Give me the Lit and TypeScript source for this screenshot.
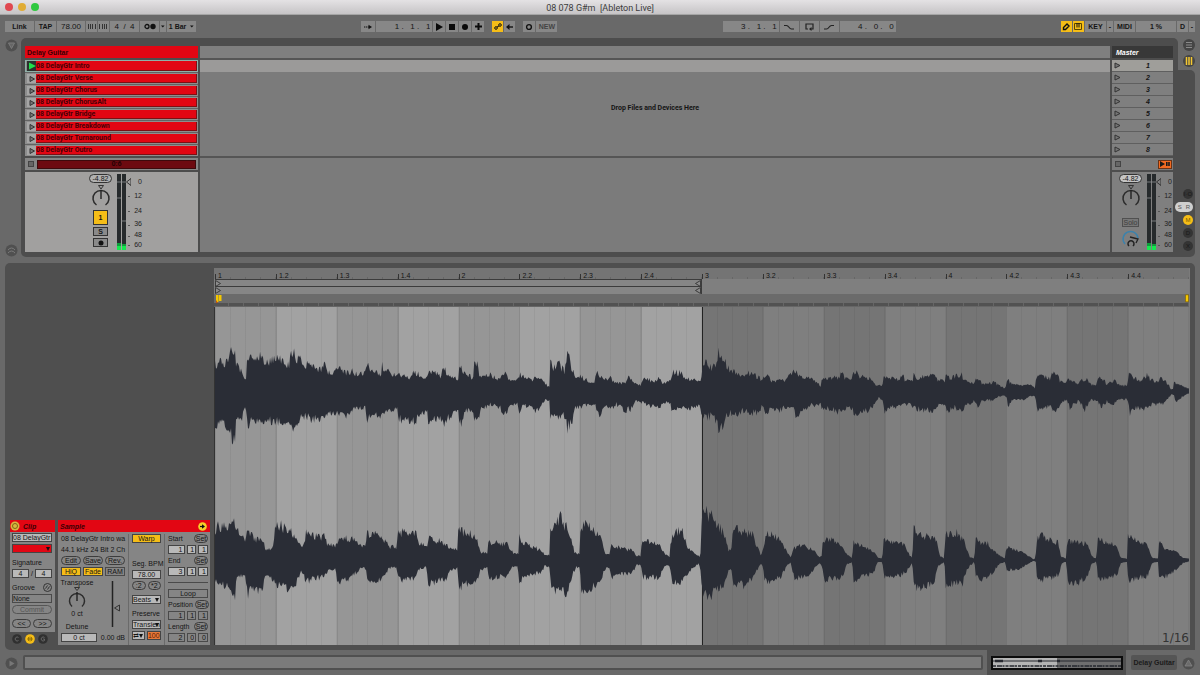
import { LitElement, html, svg, css } from "lit";
import { customElement } from "lit/decorators.js";
import { classMap } from "lit/directives/class-map.js";

const CLIPS = ["Intro", "Verse", "Chorus", "ChorusAlt", "Bridge", "Breakdown", "Turnaround", "Outro"];

/* Envelope outlines: pairs of x and row, one string per stretch of audio. */
type Stretch = { from: number; up: string; down: string };
type Channel = { mid: number; axis: number; stretches: Stretch[] };

const LEFT: Channel = {
  mid: 390, axis: 255, stretches: [
    { from: -48,
      up: "48 305 60 297 90 292 93 255 108 275 115 310 130 325 138 352 142 345 145 272 160 292 180 288 187 265 195 295 230 290 240 280 250 298 265 305 272 305 273 260 288 258 292 285 320 300 350 315 370 315 376 303 382 325 408 328 413 312 440 330 455 330 458 318 465 330 500 332 503 295 510 315 545 332 548 305 560 325 595 336 635 345 645 325 655 330 665 347 684 347 687 320 705 330 725 340 735 308 745 340 775 350",
      down: "48 490 90 505 98 535 108 535 112 480 130 470 138 440 143 450 146 515 155 480 190 490 230 485 265 480 273 500 276 515 288 512 295 480 320 470 345 480 378 475 385 455 440 465 458 460 465 445 500 440 503 490 515 465 548 475 560 452 595 445 600 480 640 480 645 490 660 465 684 460 688 492 705 480 725 470 735 505 745 475 775 455" },
    { from: 702,
      up: "27 345 28 300 45 325 60 340 74 345 75 302 85 302 90 345 125 335 145 350 165 325 175 345 205 350 213 335 225 347 250 352 258 338 275 345 293 370 300 370 303 297 310 310 330 300 338 315 345 325 350 275 358 272 365 310 375 335 400 345 435 362 440 330 455 340 470 352 485 340 490 357 530 365 535 340 550 352 560 368 575 368 580 350 620 355 632 340 640 365 663 357 670 325 695 330 710 350 740 350 755 362 758 315 767 290 775 310 800 310 808 260 815 275 825 290 835 310 850 325 865 335 900 328 935 350 950 330 965 355 1005 355 1035 325 1050 340 1075 345 1100 357 1113 372",
      down: "27 460 28 508 40 485 50 450 73 450 75 487 85 475 95 450 120 430 150 440 168 465 180 440 205 430 210 450 225 435 250 435 258 455 275 435 290 415 300 418 303 465 325 475 340 460 350 485 353 508 370 485 378 440 400 440 420 430 437 430 445 455 455 465 463 435 490 442 500 430 530 450 545 445 560 420 580 425 600 435 630 445 640 425 663 430 665 455 680 445 735 440 750 430 757 460 765 475 795 465 805 508 825 492 835 460 865 460 885 450 900 460 930 455 938 430 950 465 965 440 990 450 1005 440 1030 440 1037 465 1060 455 1075 435 1113 430" },
    { from: 1812,
      up: "3 352 15 345 60 345 65 325 75 345 95 350 107 320 115 340 150 345 170 371 188 371 193 340 240 350 247 330 255 350 280 350 283 325 290 345 330 340 340 325 350 350 375 357 380 320 390 345 425 332 430 347 445 360 465 362 470 347 490 365 525 360 545 375 557 378 563 350 575 365 600 370 625 363 645 378 650 340 690 345 700 330 715 335 720 355 740 362 747 345 770 367 790 350 800 350 812 367 830 367 835 343 850 350 860 365 885 355 900 370 922 370 928 328 940 345 965 355 985 332 990 350 1016 360 1020 347 1045 365 1052 382 1059 382 1062 362 1080 367 1107 382",
      down: "3 440 40 450 65 458 80 440 95 440 107 467 120 450 150 452 175 410 190 415 195 458 215 442 240 435 270 430 285 445 340 452 355 435 375 430 382 452 400 440 428 447 440 430 465 420 472 442 485 420 520 415 545 402 560 405 565 437 580 415 610 415 630 405 645 405 652 445 690 435 698 457 715 440 730 420 742 420 750 440 775 420 795 447 812 415 835 420 845 442 860 420 880 430 895 412 922 415 930 457 950 440 980 447 1000 430 1025 432 1045 410 1055 397 1062 402 1067 427 1085 407 1107 395" },
  ],
};

const RIGHT: Channel = {
  mid: 240, axis: 762, stretches: [
    { from: -48,
      up: "48 170 55 130 90 130 97 112 110 115 115 150 130 150 137 190 143 145 155 160 175 175 195 185 200 206 220 206 225 180 228 115 240 125 265 145 272 135 290 165 305 198 315 190 322 140 335 160 375 165 385 190 410 192 415 175 430 170 460 172 485 190 498 196 502 155 545 155 555 175 570 197 592 198 597 150 650 155 660 188 683 196 687 165 705 175 740 185 755 200 776 206 778 105 783 145 800 150 815 155 835 175 843 215 865 215 868 180 925 188 930 207 950 220 957 218 960 165 970 185 1020 205 1035 220 1050 222 1053 118 1060 150 1070 120 1085 102 1090 130 1100 130 1115 160 1125 215 1140 220 1143 140 1160 125 1170 135 1190 155 1205 170 1213 205 1220 220 1230 222 1235 190 1260 200 1300 210 1310 226 1323 226 1328 178 1380 182 1395 220 1410 230 1413 180 1430 145 1450 145 1460 190 1480 210 1500 227",
      down: "48 300 60 320 90 325 108 350 113 300 130 290 137 280 143 325 148 352 160 325 190 340 200 290 220 300 230 320 285 335 295 300 305 280 315 285 318 320 330 305 380 290 390 270 410 270 415 312 450 300 470 280 485 265 500 265 503 307 545 305 560 280 575 262 592 265 597 302 640 300 660 270 680 260 688 318 740 300 755 270 776 265 779 355 787 320 820 312 835 300 843 270 865 265 868 302 920 290 935 265 955 260 960 315 970 300 1030 275 1035 255 1050 265 1055 325 1080 345 1105 342 1120 285 1130 260 1142 265 1145 330 1160 340 1205 305 1215 270 1230 265 1238 302 1245 290 1300 280 1310 255 1325 255 1330 297 1380 295 1395 258 1412 258 1415 300 1435 322 1455 300 1475 270 1498 250" },
    { from: 1452,
      up: "3 215 8 75 15 90 38 90 45 110 60 130 75 160 80 185 88 212 95 205 98 165 108 135 130 145 160 160 170 190 185 227 195 180 200 155 225 160 245 180 265 220 273 231 285 200 300 190 340 205 360 231 366 225 370 170 400 178 430 190 440 220 458 232 461 175 480 190 520 210 535 233 548 233 552 165 570 180 615 190 625 215 638 235 641 137 655 155 710 175 720 225 734 235 737 138 745 165 755 148 770 150 780 165 792 165 800 205 810 230 824 235 828 168 845 190 862 182 875 200 900 225 915 234 920 198 960 210 985 225 1000 237 1007 235 1010 175 1025 158 1045 170 1075 185 1083 227 1099 235 1102 182 1130 180 1165 190 1175 227 1190 235 1193 165 1210 182 1250 192 1262 231 1281 235 1284 163 1310 180 1345 195 1355 231 1374 235 1377 178 1390 200 1430 215 1450 233 1469 235",
      down: "3 280 8 335 20 358 45 345 75 318 88 268 96 275 100 320 140 320 165 290 175 265 187 250 195 300 210 312 245 292 265 255 273 248 285 302 330 285 360 248 368 260 375 315 390 302 430 292 440 255 458 245 462 310 480 292 520 285 535 245 548 245 553 297 600 290 620 277 638 245 642 315 655 330 700 322 715 260 734 245 738 318 770 315 790 315 800 270 824 245 828 285 845 302 875 287 900 250 915 245 920 272 960 267 1000 242 1008 245 1012 308 1060 297 1080 282 1085 250 1099 245 1103 308 1140 312 1165 290 1175 250 1190 245 1194 302 1250 290 1262 250 1281 245 1285 305 1345 290 1355 250 1374 245 1378 305 1420 277 1450 248 1469 244" },
  ],
};

function outline(ch: Channel, side: "up" | "down"): Array<[number, number]> {
  const pts: Array<[number, number]> = [];
  for (const s of ch.stretches) {
    const n = s[side].split(" ").map(Number);
    for (let i = 0; i < n.length; i += 2) pts.push([n[i] + s.from, Math.abs(n[i + 1] - ch.mid)]);
  }
  return pts;
}

function sample(pts: Array<[number, number]>, seed: number): Array<[number, number]> {
  const out: Array<[number, number]> = [];
  let r = seed;
  let k = 0;
  for (let x = 0; x <= 2919; x += 3) {
    while (k < pts.length - 2 && pts[k + 1][0] < x) k++;
    const [x0, a0] = pts[k];
    const [x1, a1] = pts[k + 1];
    const t = Math.min(1, Math.max(0, (x - x0) / (x1 - x0 || 1)));
    r = (r * 16807) % 2147483647;
    const noise = r / 2147483647;
    out.push([x, (a0 + (a1 - a0) * t) * (1.1 - 0.34 * noise)]);
  }
  return out;
}

function wavePath(ch: Channel, seed: number): string {
  const top = sample(outline(ch, "up"), seed).map(([x, a]) => `${x} ${(ch.axis - a).toFixed(0)}`);
  const bottom = sample(outline(ch, "down"), seed + 77).reverse().map(([x, a]) => `${x} ${(ch.axis + a).toFixed(0)}`);
  return `M${top.join("L")}L${bottom.join("L")}Z`;
}

const WAVES = [wavePath(LEFT, 4211), wavePath(RIGHT, 977)];

const base = css`
  * { box-sizing: border-box; }
  button, input, select {
    font: inherit; color: inherit; margin: 0; padding: 0; border: 0; border-radius: 0;
    background: none; min-width: 0; appearance: none; outline: none;
  }
  button { display: flex; align-items: center; justify-content: center; white-space: nowrap; }
  svg { display: block; flex: none; }
`;

@customElement("transport-bar")
class TransportBar extends LitElement {
  static styles = [base, css`
    :host { display: flex; justify-content: space-between; padding: 6px 5px; height: 23px;
      font: bold 7px "Liberation Sans", sans-serif; color: #151515; }
    .group, .set { display: flex; gap: 1px; }
    .group { gap: 8px; }
    .set > * { height: 11px; background: #878787; }
    .w5 { width: 6px; } .w11 { width: 11px; } .w12 { width: 12px; } .w14 { width: 14px; } .w19 { width: 19px; }
    .w21 { width: 21px; } .w28 { width: 28px; } .w29 { width: 29px; } .w40 { width: 40px; } .w57 { width: 56px; }
    .on { background: #f5bd17; }
    .num { font-size: 8px; font-weight: normal; text-align: center; }
    .pos { font-size: 8px; font-weight: normal; text-align: right; padding-right: 2px; white-space: pre; }
    .dim { color: #444; }
  `];
  render() {
    return html`
      <div class="set">
        <button class="w29">Link</button><button class="w21">TAP</button>
        <input class="w28 num" aria-label="Tempo" value="78.00">
        <button class="w11" aria-label="Nudge down"><svg width="9" height="7"><path d="M1.500 1v5M3.500 1v5M5.500 1v5M8.500 1v5" stroke="#333"/></svg></button>
        <button class="w11" aria-label="Nudge up"><svg width="9" height="7"><path d="M.5 1v5M3.500 1v5M5.500 1v5M7.500 1v5" stroke="#333"/></svg></button>
        <input class="w29 num" aria-label="Time signature" value="4  /  4">
        <button class="w19" aria-label="Metronome"><svg width="12" height="7"><circle cx="3" cy="3.500" r="2" fill="none" stroke="#111" stroke-width="1.300"/><circle cx="9" cy="3.500" r="2.700" fill="#111"/></svg></button>
        <button class="w5" aria-label="Metronome options"><svg width="4" height="3"><path d="M0 .5h3.600L1.800 2.600z" fill="#111"/></svg></button>
        <button class="w29">1 Bar&nbsp;&nbsp;<svg width="4" height="3"><path d="M0 .5h3.600L1.800 2.600z" fill="#111"/></svg></button>
      </div>
      <div class="group">
        <div class="set">
          <button class="w14" aria-label="Follow"><svg width="8" height="6"><path d="M0 3h6" stroke="#111" stroke-dasharray="1.400 .6"/><path d="M4.500.7L8 3 4.500 5.300z" fill="#111"/></svg></button>
          <input class="w57 pos" aria-label="Position" value="1 .   1 .   1">
          <button class="w12" aria-label="Play"><svg width="7" height="8"><path d="M0 0l7 4-7 4z" fill="#0a0a0a"/></svg></button>
          <button class="w12" aria-label="Stop"><svg width="6" height="6"><path d="M0 0h6v6H0z" fill="#0a0a0a"/></svg></button>
          <button class="w12" aria-label="Record"><svg width="6" height="6"><circle cx="3" cy="3" r="3" fill="#0a0a0a"/></svg></button>
          <button class="w12" aria-label="Overdub"><svg width="7" height="7"><path d="M3.500 0v7M0 3.500h7" stroke="#0a0a0a" stroke-width="2"/></svg></button>
        </div>
        <div class="set">
          <button class="w11 on" aria-label="Automation arm"><svg width="8" height="7"><circle cx="2" cy="5" r="1.300" fill="none" stroke="#111"/><circle cx="6" cy="2" r="1.300" fill="none" stroke="#111"/><path d="M3 4l2-1" stroke="#111"/></svg></button>
          <button class="w11" aria-label="Re-enable automation"><svg width="7" height="6"><path d="M2 3h5" stroke="#111" stroke-width="1.400"/><path d="M3.500 0L0 3l3.500 3z" fill="#111"/></svg></button>
        </div>
        <div class="set">
          <button class="w12" aria-label="Session record"><svg width="8" height="8"><circle cx="4" cy="4" r="2.400" fill="none" stroke="#111" stroke-width="1.400"/></svg></button>
          <button class="w21 dim">NEW</button>
        </div>
      </div>
      <div class="set">
        <input class="w57 pos" aria-label="Loop start" value="3 .   1 .   1">
        <button class="w19" aria-label="Punch in"><svg width="10" height="6"><path d="M0 1.500h2.500C5 1.500 5 5 7.500 5H10" fill="none" stroke="#222" stroke-width="1.200"/></svg></button>
        <button class="w19" aria-label="Loop"><svg width="9" height="8"><path d="M3 6H1V1h7v5H6" fill="none" stroke="#222" stroke-width="1.200"/><path d="M6.500 4v4L4 6z" fill="#222"/></svg></button>
        <button class="w19" aria-label="Punch out"><svg width="10" height="6"><path d="M0 5h2.500C5 5 5 1.500 7.500 1.500H10" fill="none" stroke="#222" stroke-width="1.200"/></svg></button>
        <input class="w57 pos" aria-label="Loop length" value="4 .   0 .   0">
      </div>
      <div class="set">
        <button class="w11 on" aria-label="Draw mode"><svg width="8" height="8"><path d="M1.500 6.500V4.500L5 1l2 2-3.500 3.500z" fill="none" stroke="#111" stroke-width="1.400"/></svg></button>
        <button class="w11 on" aria-label="Computer keyboard"><svg width="8" height="7"><path d="M.5 .5v6h7v-6z" fill="none" stroke="#5c4700"/><path d="M3 0v4.500M5 0v4.500" stroke="#111"/></svg></button>
        <button class="w21">KEY</button><button class="w5">-</button>
        <button class="w21">MIDI</button><button class="w40">1 %</button>
        <button class="w11">D</button><button class="w5">-</button>
      </div>`;
  }
}

@customElement("mixer-strip")
class MixerStrip extends LitElement {
  static properties = { master: { type: Boolean } };
  declare master: boolean;
  static styles = [base, css`
    :host { display: flex; gap: 5px; height: 80px; padding: 2px 0 0 64px; font: 7px "Liberation Sans", sans-serif; color: #151515; background: #a1a09f; }
    :host([master]) { background: #7f7f7f; padding-left: 7px; }
    .controls { display: flex; flex-direction: column; align-items: center; width: 23px; gap: 2px; }
    .pill { width: 23px; height: 9px; text-align: center; border: 1px solid #333; border-radius: 5px; background: #b0b0b0; }
    :host([master]) .pill { background: #c4c4c4; }
    .num { width: 15px; height: 15px; background: #f5bd17; border: 1px solid #333; font-weight: bold; margin-top: 1px; }
    .sm { width: 15px; height: 9px; background: #8a8a8a; border: 1px solid #333; font-weight: bold; }
    .solo { width: 17px; height: 9px; background: #777; border: 1px solid #505050; color: #3e3e3e; margin: 9px 0 0; }
    .meter { display: flex; }
    .scale { display: grid; grid-template-rows: 14px 15px 14px 13px 9px 10px; align-items: center; text-align: right; width: 11px; color: #222; }
  `];
  render() {
    return html`
      <div class="controls">
        <input class="pill" aria-label="Volume" value="-4.82">
        <svg width="20" height="22">
          <path d="M7.500 .5h5L10 4z" fill="none" stroke="#333"/>
          <path d="M5.500 20A8 8 0 1 1 14.500 20" fill="none" stroke="#2c2c2c" stroke-width="1.500"/>
          <path d="M10 5v9" stroke="#222" stroke-width="1.400"/>
        </svg>
        ${this.master
          ? html`<button class="solo">Solo</button>
            <svg width="20" height="18">
              <path d="M4 15A7.500 7.500 0 1 1 17 9" fill="none" stroke="#3b82ac" stroke-width="1.500"/>
              <path d="M9 8l8 2-2 4" fill="none" stroke="#222" stroke-width="1.300"/>
              <path d="M8 17a3 3 0 1 1 4 0" fill="none" stroke="#222" stroke-width="1.500"/>
            </svg>`
          : html`<button class="num">1</button><button class="sm">S</button>
            <button class="sm" aria-label="Arm"><svg width="6" height="6"><circle cx="3" cy="3" r="2.500" fill="#111"/></svg></button>`}
      </div>
      <div class="meter">
        <svg width="14" height="77">
          <path d="M0 0h4v76H0zM5 0h4v76H5z" fill="#262a2c"/>
          <path d="M0 8h9M0 24h4M4 47h5" stroke="#8e9092" stroke-width=".8"/>
          <path d="M0 72h4v4H0zM5 72h4v4H5z" fill="#16e84f"/><path d="M0 69h4v3H0zM5 70h4v2H5z" fill="#0f9c3c"/>
          <path d="M14 4.500v7L9.500 8z" fill="none" stroke="#333"/>
          <path d="M11 22.500h2M11 37.500h2M11 51.500h2M11 62.500h2M11 71.500h2" stroke="#555"/>
        </svg>
        <div class="scale"><span>0</span><span>12</span><span>24</span><span>36</span><span>48</span><span>60</span></div>
      </div>`;
  }
}

@customElement("session-view")
class SessionView extends LitElement {
  static styles = [base, css`
    :host { display: flex; font: bold 7px Roboto, sans-serif; color: #151515; }
    .gutter { width: 21px; display: flex; flex-direction: column; justify-content: space-between; padding: 1px 0 0 5px; }
    .panel { flex: 1; display: flex; gap: 2px; background: #4d4d4d; border-radius: 5px 5px 0 5px; padding: 8px 5px 5px 4px; }
    .col { display: flex; flex-direction: column; }
    .track { width: 173px; } .free { flex: 1; background: #555; } .master { width: 61px; }
    .head { height: 12px; display: flex; align-items: center; font-family: "Liberation Sans", sans-serif; margin-bottom: 2px; }
    .track .head { background: #e20613; padding-left: 2px; color: #3a0004; }
    .free .head { background: #7f7f7f; }
    .master .head { background: #383838; color: #fff; font-style: italic; padding-left: 4px; }
    .slots { background: #8d8d8d; height: 96px; }
    .slot { display: flex; height: 12px; padding: 1px 1px 1px 2px; border-top: 1px solid #636363; }
    .slot.playing { border: 1px solid #8fb0a8; padding: 0 0 0 1px; }
    .launch { width: 9px; background: #a5a5a5; }
    .playing .launch { background: #2b302d; }
    .clip { flex: 1; background: #e20613; justify-content: flex-start; color: #4a0006; border: 1px solid #7c1015; border-width: 0 1px 1px 0; }
    .stops { height: 12px; margin: 2px 0; background: #858585; display: flex; align-items: center; gap: 3px; padding: 0 2px 0 3px; }
    .square { width: 6px; height: 6px; background: #666; border: 1px solid #444; }
    .status { flex: 1; height: 9px; background: #6d0a10; border: 1px solid #3c0a0c; color: #250305; text-align: center; line-height: 7px; }
    .light { height: 12px; background: #9b9a99; }
    .drop { height: 84px; background: #7b7b7b; text-align: center; padding-top: 32px; }
    .rest { flex: 1; margin-top: 2px; background: #7b7b7b; }
    .scene { width: 100%; height: 12px; background: #7f7f7f; border-bottom: 1px solid #5f5f5f; font-style: italic; font-family: "Liberation Sans", sans-serif; padding-left: 2px; justify-content: flex-start; gap: 25px; }
    .scene.first { background: #9f9e9a; }
    .master .stops { justify-content: space-between; padding: 0 1px 0 3px; background: #7b7b7b; }
    .back { width: 14px; height: 9px; background: #f26a21; border: 1px solid #6b3315; }
    .rail { width: 17px; margin-right: 5px; display: flex; flex-direction: column; }
    .tabs { height: 32px; padding: 1px 0 0 5px; display: flex; flex-direction: column; gap: 4px; }
    .toggles { flex: 1; background: #4d4d4d; border-radius: 0 5px 5px 0; display: flex; flex-direction: column; justify-content: flex-end; align-items: flex-end; gap: 3px; padding: 0 2px 6px 0; }
    .dot { width: 10px; height: 10px; border-radius: 5px; background: #343434; color: #191919; font: 6px "Liberation Sans", sans-serif; }
    .dot.pair { width: 18px; background: #cfcfcf; color: #555; gap: 4px; }
    .dot.on { background: #f5bd17; color: #7a5c00; }
  `];
  render() {
    const tri = (playing: boolean) => playing
      ? svg`<path d="M1 .5l7 3.500-7 3.500z" fill="#1fe04a"/>`
      : svg`<path d="M2 1.500l4.500 2.500L2 6.500z" fill="#777" stroke="#333"/>`;
    return html`
      <div class="gutter">
        <svg width="13" height="13"><circle cx="6.500" cy="6.500" r="6" fill="#505050"/><path d="M3.500 4h6L6.500 9.500z" fill="#666" stroke="#7b7b7b"/></svg>
        <svg width="13" height="13"><circle cx="6.500" cy="6.500" r="6" fill="#505050"/><path d="M3 6q3.500-4 7 0M3 9q3.500-4 7 0" fill="none" stroke="#7b7b7b"/></svg>
      </div>
      <div class="panel">
        <div class="col track">
          <div class="head">Delay Guitar</div>
          <div class="slots">
            ${CLIPS.map((name, i) => html`
              <div class=${classMap({ slot: true, playing: i === 0 })}>
                <button class="launch" aria-label="Launch ${name}"><svg width="8" height="8">${tri(i === 0)}</svg></button>
                <button class="clip">08 DelayGtr ${name}</button>
              </div>`)}
          </div>
          <div class="stops"><button class="square" aria-label="Stop track"></button><div class="status">0:6</div></div>
          <mixer-strip></mixer-strip>
        </div>
        <div class="col free">
          <div class="head"></div>
          <div class="light"></div>
          <div class="drop">Drop Files and Devices Here</div>
          <div class="rest"></div>
        </div>
        <div class="col master">
          <div class="head">Master</div>
          <div class="slots">
            ${CLIPS.map((_, i) => html`<button class=${classMap({ scene: true, first: i === 0 })}><svg width="7" height="7"><path d="M1 1l5 2.500-5 2.500z" fill="#777" stroke="#333"/></svg>${i + 1}</button>`)}
          </div>
          <div class="stops"><button class="square" aria-label="Stop all clips"></button>
            <button class="back" aria-label="Back to arrangement"><svg width="10" height="6"><path d="M0 0l5 3-5 3zM6 1h1.600v4H6zM8.200 1h1.600v4H8.200z" fill="#1a1a1a"/></svg></button></div>
          <mixer-strip master></mixer-strip>
        </div>
      </div>
      <div class="rail">
        <div class="tabs">
          <svg width="12" height="12"><circle cx="6" cy="6" r="6" fill="#454545"/><path d="M3 3.500h6M3 6h6M3 8.500h6" stroke="#8a8a8a"/></svg>
          <svg width="12" height="12"><circle cx="6" cy="6" r="6" fill="#454545"/><path d="M3.500 2v8M6 2v8M8.500 2v8" stroke="#f5c931" stroke-width="1.500"/></svg>
        </div>
        <div class="toggles">
          <button class="dot">I·O</button><button class="dot pair"><span>S</span><span>R</span></button>
          <button class="dot on">M</button><button class="dot">D</button><button class="dot">X</button>
        </div>
      </div>`;
  }
}

@customElement("clip-inspector")
class ClipInspector extends LitElement {
  static styles = [base, css`
    :host { display: flex; align-items: flex-start; gap: 3px; font: 7px/9px "Liberation Sans", sans-serif; color: #151515; }
    .box { background: #858585; }
    .title { height: 12px; background: #e20613; color: #3a0004; font: italic bold 7px "Liberation Sans", sans-serif; display: flex; align-items: center; justify-content: space-between; padding: 0 3px 0 2px; }
    .clip { width: 45px; } .clip .title { justify-content: flex-start; gap: 3px; padding-left: 0; }
    .body { height: 100px; padding: 1px 3px 0 2px; display: flex; flex-direction: column; gap: 2px; }
    .line { display: flex; gap: 2px; align-items: center; justify-content: space-between; height: 9px; white-space: nowrap; }
    .group { margin-top: 3px; }
    .field { height: 9px; background: #b9b9b9; border: 1px solid #444; flex: 1; width: 10px; line-height: 7px; text-align: center; }
    .name { text-align: left; overflow: hidden; }
    .off { background: transparent; border-color: #4a4a4a; }
    .red { background: #e20613; }
    .pill { height: 9px; border: 1px solid #3c3c3c; border-radius: 5px; flex: 1; line-height: 7px; }
    .set { flex: none; width: 14px; }
    .on { background: #f5bd17; } .orange { background: #e8793a; color: #5c1c00; }
    .dim { color: #555; border-color: #555; }
    .pick { position: relative; flex: 1; display: flex; min-width: 0; }
    .pick select { text-align: left; }
    .pick::after { content: ""; position: absolute; right: 2px; top: 3px; border: 2px solid transparent; border-top: 4px solid #111; border-bottom: 0; pointer-events: none; }
    .dots { display: flex; gap: 3px; padding: 2px 0 0 2px; }
    .sample { flex: 1; min-width: 0; }
    .cols { display: flex; height: 113px; padding-top: 2px; }
    .cols > div { padding: 0 3px; display: flex; flex-direction: column; gap: 2px; border-left: 1px solid #6a6a6a; }
    .cols > .one { width: 70px; border: 0; }
    .cols > .two { width: 36px; } .cols > .three { flex: 1; min-width: 0; padding-right: 2px; }
    .text { height: 9px; white-space: nowrap; }
    .tune { display: flex; justify-content: space-between; height: 53px; }
    .tune .left { display: flex; flex-direction: column; align-items: center; width: 32px; }
    .tune .last { margin-top: auto; }
    .space { height: 12px; } .gap { height: 1px; }
    .rule { height: 9px; display: flex; align-items: center; } .rule::after { content: ""; flex: 1; height: 1px; background: #4a4a4a; }
    .r { text-align: right; padding-right: 1px; }
    .wide { flex: 2; }
  `];
  private triple(label: string, a: string, b: string, c: string, off = false) {
    const cls = classMap({ field: true, r: true, off });
    const first = classMap({ field: true, r: true, off, wide: true });
    return html`<div class="line">
        <input class=${first} aria-label="${label} bar" value=${a}><input class=${cls} aria-label="${label} beat" value=${b}><input class=${cls} aria-label="${label} sixteenth" value=${c}>
      </div>`;
  }
  render() {
    const setLine = (label: string) => html`<div class="line"><span>${label}</span><button class="pill set">Set</button></div>`;
    return html`
      <div class="clip">
        <div class="box">
          <div class="title"><svg width="10" height="10"><circle cx="5" cy="5" r="4.500" fill="#d9b640"/><circle cx="5" cy="5" r="2.500" fill="none" stroke="#806616"/></svg>Clip</div>
          <div class="body">
            <div class="line"><input class="field name" aria-label="Clip name" value="08 DelayGtr"></div>
            <div class="line"><span class="pick"><select class="field red" aria-label="Clip colour"><option></option></select></span></div>
            <div class="line group">Signature</div>
            <div class="line"><input class="field" aria-label="Beats per bar" value="4">/<input class="field" aria-label="Beat unit" value="4"></div>
            <div class="line group">Groove <svg width="9" height="9"><circle cx="4.500" cy="4.500" r="4" fill="none" stroke="#333"/><path d="M2.500 5.500l2-3M4.500 6.500l2-3" stroke="#333"/></svg></div>
            <div class="line"><select class="field off name" aria-label="Groove"><option>None</option></select></div>
            <div class="line"><button class="pill dim">Commit</button></div>
            <div class="line group"><button class="pill">&lt;&lt;</button><button class="pill">&gt;&gt;</button></div>
          </div>
        </div>
        <div class="dots">
          <svg width="10" height="10"><circle cx="5" cy="5" r="4.800" fill="#303030"/><path d="M6.500 3.500a2 2 0 1 0 0 3" fill="none" stroke="#666"/></svg>
          <svg width="10" height="10"><circle cx="5" cy="5" r="4.800" fill="#f5bd17"/><path d="M2 5h6M3.500 3v4M6.500 3v4M5 2.500v5" stroke="#8a6a00" stroke-width=".8"/></svg>
          <svg width="10" height="10"><circle cx="5" cy="5" r="4.800" fill="#303030"/><path d="M6.500 5h-1.500M6.500 3.500a2 2 0 1 0 0 3V5" fill="none" stroke="#666"/></svg>
        </div>
      </div>
      <div class="sample box">
        <div class="title">Sample<svg width="9" height="9"><circle cx="4.500" cy="4.500" r="4.300" fill="#f5d028"/><path d="M2 4.500h3" stroke="#111" stroke-width="1.200"/><path d="M4 2.300l3 2.200-3 2.200z" fill="#111"/></svg></div>
        <div class="cols">
          <div class="one">
            <div class="text">08 DelayGtr Intro wa</div>
            <div class="text">44.1 kHz 24 Bit 2 Ch</div>
            <div class="line"><button class="pill">Edit</button><button class="pill">Save</button><button class="pill">Rev.</button></div>
            <div class="line"><button class="field on">HiQ</button><button class="field on">Fade</button><button class="field off">RAM</button></div>
            <div class="tune">
              <div class="left">
                <span>Transpose</span>
                <svg width="20" height="22"><path d="M7.500 .5h5L10 3.500z" fill="none" stroke="#333"/><path d="M5 19.500A7.500 7.500 0 1 1 15 19.500" fill="none" stroke="#2c2c2c" stroke-width="1.500"/><path d="M10 5v9" stroke="#222" stroke-width="1.400"/></svg>
                <span>0 ct</span><span class="last">Detune</span>
              </div>
              <svg width="20" height="51"><path d="M7.500 3v46" stroke="#222" stroke-width="1.500"/><path d="M14.500 27v6l-5-3z" fill="none" stroke="#333"/></svg>
            </div>
            <div class="line"><input class="field" aria-label="Detune" value="0 ct"><span>&nbsp;0.00 dB</span></div>
          </div>
          <div class="two">
            <div class="line"><button class="field on">Warp</button></div>
            <div class="space"></div>
            <div class="line">Seg. BPM</div>
            <div class="line"><input class="field" aria-label="Segment BPM" value="78.00"></div>
            <div class="line"><button class="pill">:2</button><button class="pill">*2</button></div>
            <div class="gap"></div>
            <div class="line"><span class="pick"><select class="field" aria-label="Warp mode"><option>Beats</option></select></span></div>
            <div class="gap"></div>
            <div class="line">Preserve</div>
            <div class="line"><span class="pick"><select class="field" aria-label="Preserve"><option>Transien</option></select></span></div>
            <div class="line"><span class="pick"><select class="field" aria-label="Transient loop mode"><option>⇄</option></select></span><input class="field orange" aria-label="Transient envelope" value="100"></div>
          </div>
          <div class="three">
            ${setLine("Start")}${this.triple("Start", "1", "1", "1")}
            ${setLine("End")}${this.triple("End", "3", "1", "1")}
            <div class="rule"></div>
            <div class="line"><button class="field off">Loop</button></div>
            ${setLine("Position")}${this.triple("Position", "1", "1", "1", true)}
            ${setLine("Length")}${this.triple("Length", "2", "0", "0", true)}
          </div>
        </div>
      </div>`;
  }
}

@customElement("sample-display")
class SampleDisplay extends LitElement {
  static styles = [base, css`
    :host { display: flex; flex-direction: column; background: #7b7b7b; padding-right: 1px; font: 7px "Liberation Sans", sans-serif; color: #151515; }
    .beats { display: grid; grid-template-columns: repeat(16, 1fr); }
    .ruler { height: 11px; background: #747474; align-items: end; padding-left: 1px; }
    .mark { height: 5px; border-left: 1px solid #333; padding-left: 2px; display: flex; align-items: flex-end; background: repeating-linear-gradient(90deg, transparent 0 14px, #666 14px 15px) bottom / 100% 2px no-repeat; }
    .mark span { line-height: 7px; }
    .loop { height: 15px; background: #7f7f7f; display: flex; padding-left: 1px; }
    .brace { width: 50%; border-top: 1px solid #3c3c3c; border-right: 1px solid #3c3c3c; display: flex; justify-content: space-between; background: linear-gradient(#3c3c3c, #3c3c3c) 0 6px / 100% 1px no-repeat #868686; }
    .markers { height: 9px; background: #6b6b6b; display: flex; justify-content: space-between; align-items: center; padding-left: 1px; }
    .edge { height: 4px; background: repeating-linear-gradient(90deg, #525252 0 14px, #666 14px 15px); border-bottom: 1px solid #666; }
    .wave { flex: 1; min-height: 0; display: grid; grid-template: 1fr / 1fr; border-left: 1px solid #333; overflow: hidden; }
    .wave > * { grid-area: 1 / 1; min-height: 0; }
    .beat { background: repeating-linear-gradient(90deg, transparent 0 14px, rgba(0, 0, 0, .05) 14px 15px); border-left: 1px solid #8a8a8a; }
    .beat.a { background-color: #969696; } .beat.b { background-color: #a2a2a2; }
    .beat.c { background-color: #757575; border-color: #6d6d6d; } .beat.d { background-color: #7f7f7f; border-color: #747474; }
    .beat.end { border-color: #222; }
    .audio { width: 100%; height: 100%; }
    .zoom { place-self: end; font: 12px "DejaVu Sans", sans-serif; line-height: 14px; color: #333; }
  `];
  render() {
    const beats = Array.from({ length: 16 }, (_, i) => i);
    const arrow = (d: string) => html`<svg width="6" height="14"><path d=${d} fill="#8c8c8c" stroke="#333" stroke-width=".9"/></svg>`;
    return html`
      <div class="beats ruler">${beats.map((i) => html`<div class="mark"><span>${Math.floor(i / 4) + 1}${i % 4 ? "." + ((i % 4) + 1) : ""}</span></div>`)}</div>
      <div class="loop"><div class="brace">${arrow("M.5.500l5 3-5 3zM.5 7.500l5 3-5 3z")}${arrow("M5.500.500l-5 3 5 3zM5.500 7.500l-5 3 5 3z")}</div></div>
      <div class="markers">
        <svg width="7" height="9"><path d="M1 1h2.500v7H1zM4 1h2.500v6H4z" fill="#f5c800"/><path d="M1 6l2 3H1z" fill="#c5530a"/></svg>
        <svg width="4" height="9"><path d="M.5.800h3v7h-3z" fill="#f5c800" stroke="#7a5c00" stroke-width=".6"/></svg>
      </div>
      <div class="edge"></div>
      <div class="wave">
        <div class="beats">${beats.map((i) => html`<div class=${classMap({ beat: true, a: i < 8 && i % 2 === 0, b: i < 8 && i % 2 === 1, c: i > 7 && i % 2 === 0, d: i > 7 && i % 2 === 1, end: i === 8 })}></div>`)}</div>
        <svg class="audio" viewBox="0 0 2919 1017" preserveAspectRatio="none">${WAVES.map((d) => svg`<path d=${d} fill="#2a2d36"/>`)}</svg>
        <span class="zoom">1/16</span>
      </div>`;
  }
}

@customElement("app-root")
class AppRoot extends LitElement {
  static styles = [base, css`
    :host { display: flex; flex-direction: column; height: 100vh; background: #696969; overflow: hidden; font: 7px "Liberation Sans", sans-serif; color: #151515; }
    .bar { height: 15px; flex: none; background: linear-gradient(#e4e2e4, #c6c4c6); border-bottom: 1px solid #a5a5a5; display: grid; grid-template-columns: 1fr auto 1fr; align-items: center; }
    .lights { display: flex; gap: 5px; padding-left: 5px; }
    .light { width: 8px; height: 8px; border-radius: 4px; }
    .close { background: #e04850; } .min { background: #e0ac35; } .max { background: #2fc840; }
    .name { font: 9px Roboto, sans-serif; color: #3c3c3c; white-space: pre; padding-top: 1px; }
    transport-bar, session-view { flex: none; }
    .detail { flex: 1; min-height: 0; margin: 6px 5px 0; background: #4f4f4f; border-radius: 5px 5px 0 5px; padding: 5px; display: flex; }
    clip-inspector { width: 200px; align-self: flex-end; }
    sample-display { flex: 1; margin-left: 4px; min-width: 0; }
    .foot { height: 25px; flex: none; display: flex; align-items: flex-start; padding: 0 5px; }
    .info { flex: 1; height: 15px; margin: 5px 4px 0 5px; border: 2px solid #505050; border-radius: 2px; background: #7b7b7b; }
    .icon { margin-top: 7px; }
    .overview { background: #4f4f4f; padding: 6px 3px 5px 4px; }
    .map { width: 132px; height: 14px; border: 2px solid #0c0c0c; background: linear-gradient(90deg, #b5b5b5 50%, #6f6f6f 50%); }
    .chip { width: 46px; height: 15px; margin: 5px 5px 0; background: #555; border-radius: 2px; font-weight: bold; color: #1b1b1b; }
  `];
  render() {
    return html`
      <div class="bar">
        <div class="lights"><span class="light close"></span><span class="light min"></span><span class="light max"></span></div>
        <div class="name">08 078 G#m  [Ableton Live]</div>
      </div>
      <transport-bar></transport-bar>
      <session-view></session-view>
      <div class="detail"><clip-inspector></clip-inspector><sample-display></sample-display></div>
      <div class="foot">
        <svg class="icon" width="13" height="13"><circle cx="6.500" cy="6.500" r="6" fill="#505050"/><path d="M4.500 3.500l5 3-5 3z" fill="#777"/></svg>
        <div class="info"></div>
        <div class="overview"><svg class="map" viewBox="0 0 128 10"><path d="M0 3h128" stroke="#26282f" stroke-width="1.200"/><path d="M0 8h128" stroke="#26282f" stroke-width="1.600" stroke-dasharray="3 1 5 .5 2 1"/><path d="M2 3h8M45 3h4M64 3h3" stroke="#26282f" stroke-width="2.500"/></svg></div>
        <button class="chip">Delay Guitar</button>
        <svg class="icon" width="13" height="13"><circle cx="6.500" cy="6.500" r="6" fill="#505050"/><path d="M6.500 3l3.500 6H3z" fill="#6c6c6c" stroke="#888" stroke-width=".7"/></svg>
      </div>`;
  }
}
